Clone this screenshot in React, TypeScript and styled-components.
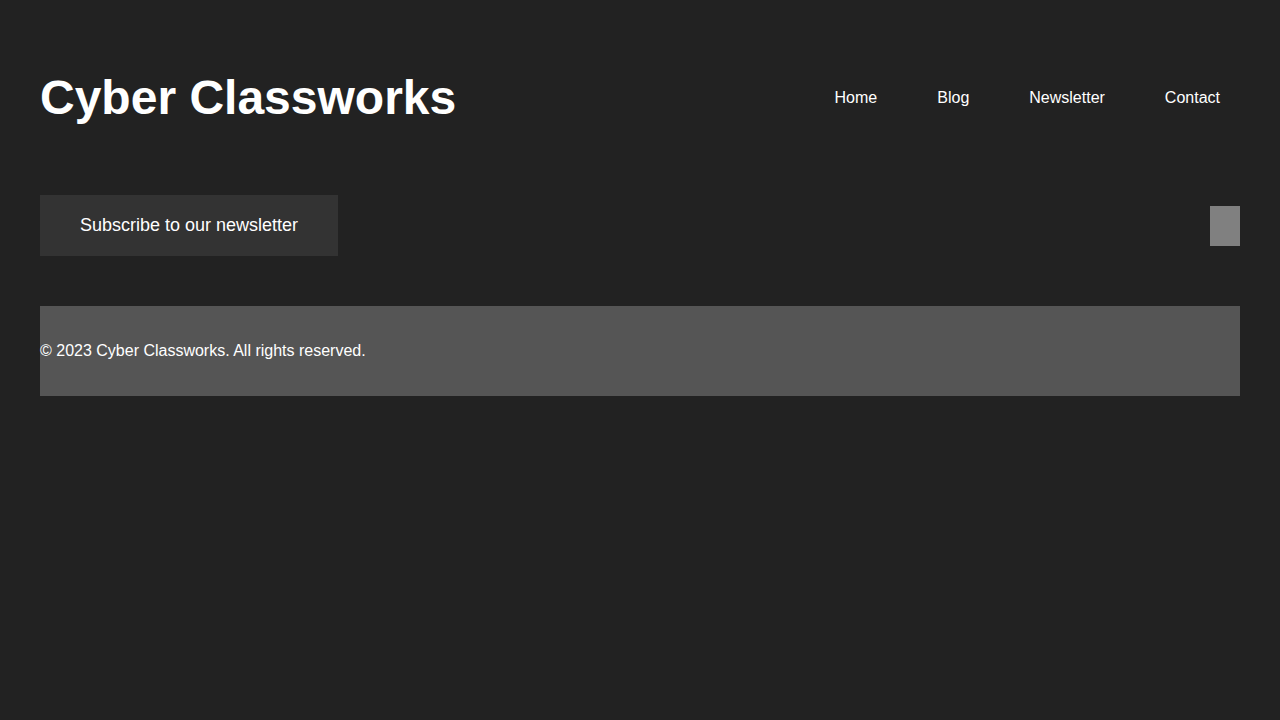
import React from "react";
import styled, { createGlobalStyle } from "styled-components";

const GlobalStyle = createGlobalStyle`
  html, body {
    margin: 0;
    padding: 0;
    background: #222222;
    color: #ffffff;
    font-family: "Liberation Sans", Arial, sans-serif;
  }
  body {
    min-height: 720px;
  }
`;

const Page = styled.div`
  padding: 40px;
  display: flex;
  flex-direction: column;
`;

const Header = styled.header`
  height: 115px;
  display: flex;
  align-items: center;
  justify-content: space-between;
`;

const Title = styled.h1`
  margin: 0;
  font-size: 48px;
  font-weight: bold;
  line-height: 56px;
  color: #ffffff;
`;

const Nav = styled.nav`
  display: flex;
  align-items: center;
  gap: 20px;
`;

const NavLink = styled.a`
  padding: 10px 20px;
  font-size: 16px;
  color: #ffffff;
  text-decoration: none;
`;

const Main = styled.main`
  margin-top: 40px;
  display: flex;
  align-items: center;
  justify-content: space-between;
`;

const SubscribeButton = styled.button`
  background: #333333;
  color: #ffffff;
  border: none;
  padding: 20px 40px;
  height: 61px;
  font-family: "Liberation Sans", Arial, sans-serif;
  font-size: 18px;
  cursor: pointer;
`;

const Block = styled.div`
  width: 30px;
  height: 40px;
  background: #808080;
`;

const Footer = styled.footer`
  margin-top: 50px;
  height: 90px;
  background: #555555;
  display: flex;
  align-items: center;
  font-size: 16px;
`;

export default function App() {
  return (
    <>
      <GlobalStyle />
      <Page>
        <Header>
          <Title>Cyber Classworks</Title>
          <Nav>
            <NavLink href="#">Home</NavLink>
            <NavLink href="#">Blog</NavLink>
            <NavLink href="#">Newsletter</NavLink>
            <NavLink href="#">Contact</NavLink>
          </Nav>
        </Header>
        <Main>
          <SubscribeButton>Subscribe to our newsletter</SubscribeButton>
          <Block />
        </Main>
        <Footer>© 2023 Cyber Classworks. All rights reserved.</Footer>
      </Page>
    </>
  );
}
